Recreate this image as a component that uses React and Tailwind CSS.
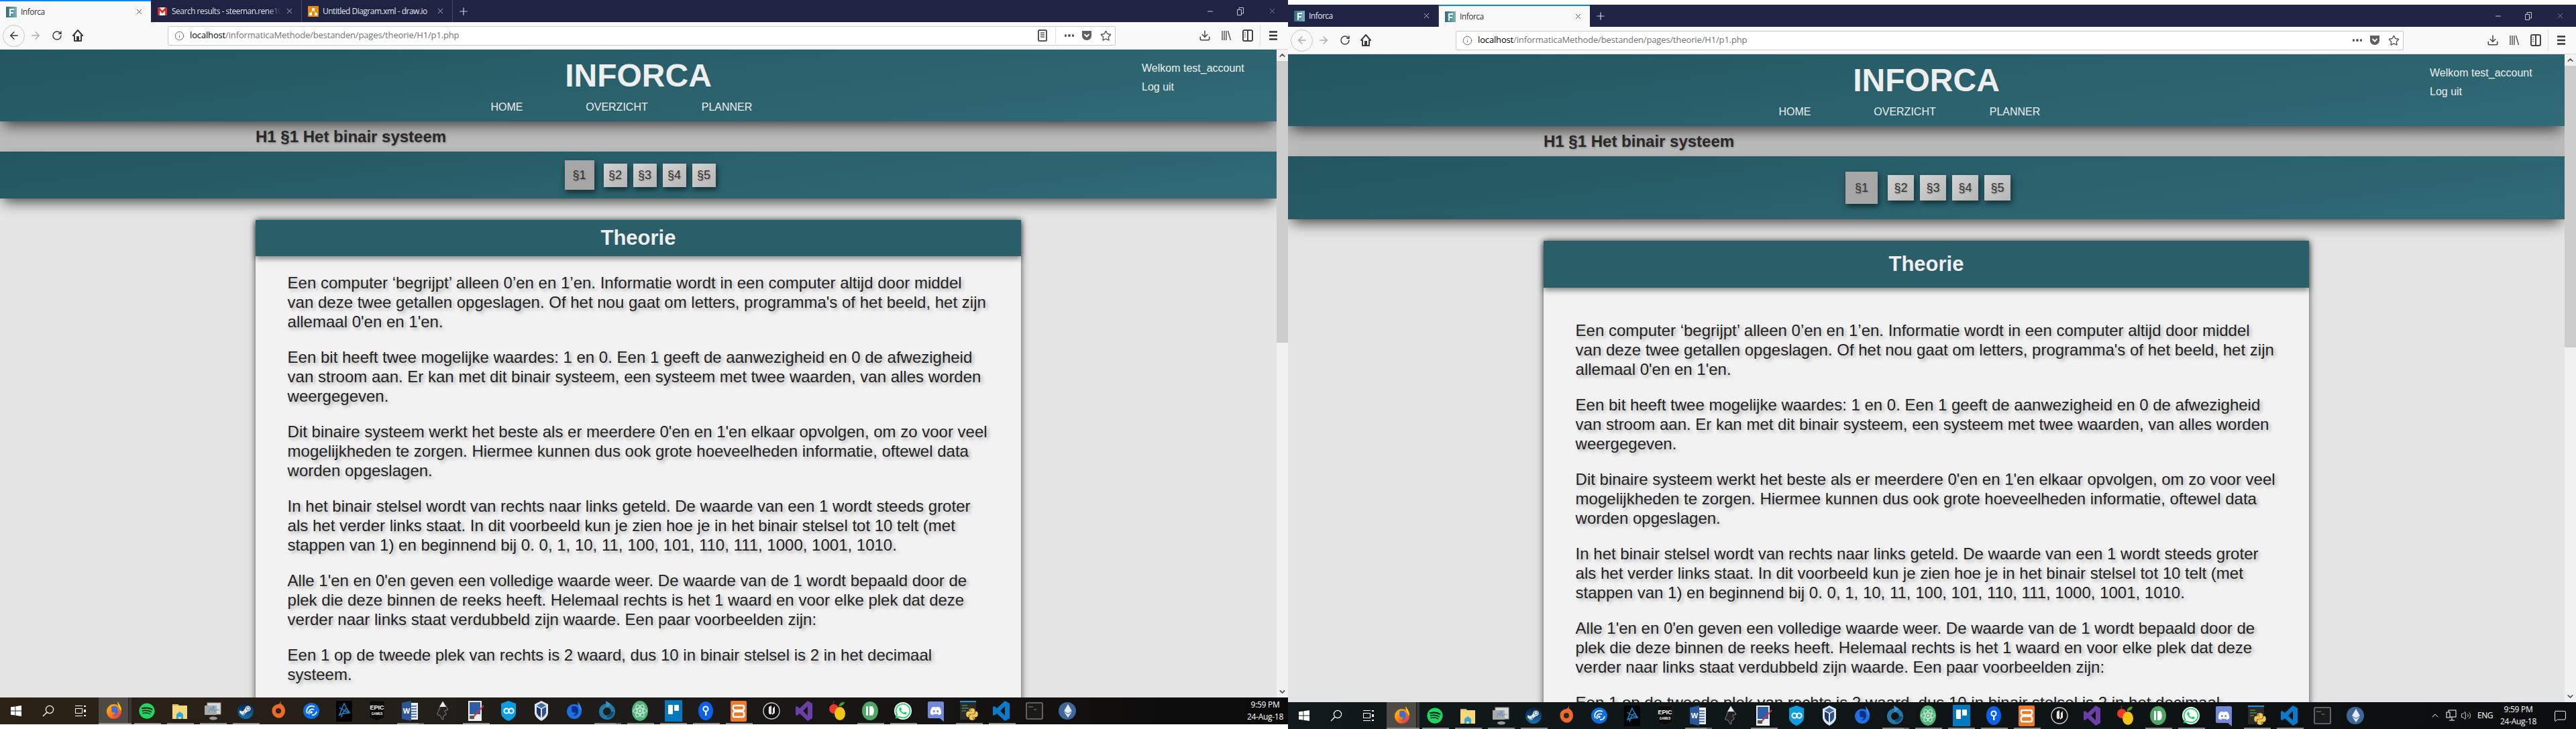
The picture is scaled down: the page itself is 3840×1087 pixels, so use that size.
import React from "react";
import { ArrowLeft, ArrowRight, RotateCw, Info, X, Plus, Minus, Star, Download, ChevronUp, ChevronDown, Volume2, MessageSquare } from "lucide-react";
import { FaSpotify, FaSteamSymbol, FaWhatsapp, FaDiscord, FaEthereum, FaPython } from "react-icons/fa";

const Svg = ({ children, w = 28, h = 32, vb = "0 0 28 32" }) => (
  <svg width={w} height={h} viewBox={vb}>{children}</svg>
);

const Firefox = ({ blue }) => (
  <Svg>
    <defs>
      <linearGradient id="ffg" x1="0" y1="0" x2="1" y2="1">
        <stop offset="0" stopColor="#ffcb00" /><stop offset="0.5" stopColor="#ff7a1a" /><stop offset="1" stopColor="#e6204f" />
      </linearGradient>
    </defs>
    <circle cx="14" cy="17" r="11" fill={blue ? "#1e6fe0" : "url(#ffg)"} />
    <path d="M19 2c3 4 6 8 6 14-3-2-5-6-6-14z" fill={blue ? "#3b8cf0" : "#ffd000"} />
    <path d="M10 10c6-3 10 0 10 6s-4 8-8 7c3-1 5-3 3-5-2 1-5 0-5-3 1-1 0-3 0-5z" fill={blue ? "#0f2f8f" : "#3a6fd8"} />
  </Svg>
);
const Folder = () => (
  <Svg>
    <path d="M3 6h8l2 2h12v20H3z" fill="#f5d97a" />
    <path d="M3 6h8l2 2H3z" fill="#e0b73f" />
    <path d="M9 28v-7l5-4 5 4v7h-3v-3h-4v3z" fill="#2ea7e0" />
  </Svg>
);
const Monitor = () => (
  <Svg>
    <rect x="6" y="4" width="20" height="17" fill="#d8d8d8" stroke="#9a9a9a" />
    <rect x="2" y="8" width="18" height="14" fill="#a9a9a9" />
    <path d="M8 18l3-6 2 4 2-7 2 8 3-3 4 1" stroke="#4d8fd0" fill="none" />
    <ellipse cx="15" cy="27" rx="6" ry="2.5" fill="#999" />
  </Svg>
);
const Steam = () => (
  <Svg>
    <defs>
      <linearGradient id="stg" x1="0" y1="0" x2="0" y2="1"><stop offset="0" stopColor="#0c1d3e" /><stop offset="1" stopColor="#1574b0" /></linearGradient>
    </defs>
    <circle cx="14" cy="16" r="12" fill="url(#stg)" />
    <foreignObject x="4" y="6" width="20" height="20"><FaSteamSymbol className="text-[#e5e5e5] text-[19px]" /></foreignObject>
  </Svg>
);
const Origin = () => (
  <Svg>
    <path d="M18 1c-1 3-2 4-4 5C7 7 3 12 5 19c2 6 8 9 13 7 6-3 7-10 5-15-1-3-4-5-6-6 1-1 1-2 1-4z" fill="#ee6a2b" />
    <circle cx="14" cy="16" r="4" fill="#2a2422" />
  </Svg>
);
const Uplay = () => (
  <Svg>
    <circle cx="14" cy="16" r="12" fill="#0a6de0" />
    <path d="M8 20c-3-8 4-14 11-10M11 21c-2-5 2-9 7-7M15 22c3 1 6-1 7-5" stroke="#fff" strokeWidth="1.8" fill="none" />
    <circle cx="14" cy="18" r="1.8" fill="#fff" />
  </Svg>
);
const Bnet = () => (
  <Svg>
    <rect x="2" y="1" width="24" height="31" rx="1" fill="#020406" />
    <path d="M14 5c2 5 5 9 8 14-6 0-11 1-15 3 2-5 4-11 7-17zM7 11c4 3 9 6 14 7M10 25c1-5 4-10 8-13" stroke="#1b88d0" strokeWidth="1.5" fill="none" />
  </Svg>
);
const Epic = () => (
  <Svg>
    <path d="M3 1h22v25l-11 5-11-5z" fill="#0c0c0c" stroke="#333" strokeWidth="0.5" />
    <text x="14" y="14" textAnchor="middle" fontSize="9" fontWeight="700" fill="#fff" fontFamily="Liberation Sans">EPIC</text>
    <text x="14" y="22" textAnchor="middle" fontSize="4.5" fontWeight="700" fill="#fff" fontFamily="Liberation Sans">GAMES</text>
  </Svg>
);
const Word = () => (
  <Svg>
    <rect x="10" y="4" width="16" height="25" fill="#e8eef8" />
    <path d="M15 9h9M15 13h9M15 17h9M15 21h9M15 25h9" stroke="#2b579a" strokeWidth="1.5" />
    <path d="M2 4l14-3v30L2 28z" fill="#2b579a" />
    <text x="9" y="20" textAnchor="middle" fontSize="11" fontWeight="700" fill="#fff" fontFamily="Liberation Sans">W</text>
  </Svg>
);
const Inkscape = () => (
  <Svg>
    <path d="M14 2l8 12c-2 2-4 0-5 2s3 2 2 5c-1 2-3 1-4 3s1 4-1 5c-2 0-2-4-4-6-2-1-5 0-4-3 0-2 2-3 2-5z" fill="#222" stroke="#bbb" strokeWidth="0.7" />
    <path d="M14 2l5 8h-10z" fill="#eaeaea" />
  </Svg>
);
const Paint = () => (
  <Svg>
    <rect x="3" y="1" width="20" height="30" fill="#f0f0f0" />
    <rect x="5" y="3" width="16" height="18" fill="#2f5ea8" />
    <path d="M8 28L26 8" stroke="#d0343f" strokeWidth="2" />
    <rect x="5" y="23" width="7" height="5" fill="#555" />
  </Svg>
);
const Vpn = () => (
  <Svg>
    <path d="M14 1l11 4v14c0 6-6 10-11 12-5-2-11-6-11-12V5z" fill="#0a9de0" />
    <circle cx="11" cy="16" r="3.6" stroke="#fff" strokeWidth="2" fill="none" />
    <circle cx="18" cy="16" r="3.6" stroke="#fff" strokeWidth="2" fill="none" />
  </Svg>
);
const VBox = () => (
  <Svg>
    <path d="M14 1l10 5v13c0 5-6 10-10 12-4-2-10-7-10-12V6z" fill="#dfe5ee" />
    <path d="M14 4l7 4-7 4-7-4z" fill="#3a6ea8" />
    <path d="M7 10l6 3v13c-3-2-6-5-6-8z" fill="#1f3a66" />
    <path d="M21 10l-6 3v13c3-2 6-5 6-8z" fill="#2c5488" />
  </Svg>
);
const Ring = () => (
  <Svg>
    <circle cx="14" cy="17" r="9" stroke="#2379a8" strokeWidth="6" fill="none" />
    <path d="M12 1l8 5-7 5z" fill="#3a95c8" />
    <path d="M14 24c6 0 8-4 8-7" stroke="#124c70" strokeWidth="5" fill="none" />
  </Svg>
);
const Atom = () => (
  <Svg>
    <ellipse cx="14" cy="16" rx="12" ry="15" fill="#4fb67a" />
    <ellipse cx="14" cy="16" rx="10" ry="4" stroke="#eaf7ee" fill="none" />
    <ellipse cx="14" cy="16" rx="10" ry="4" stroke="#eaf7ee" fill="none" transform="rotate(60 14 16)" />
    <ellipse cx="14" cy="16" rx="10" ry="4" stroke="#eaf7ee" fill="none" transform="rotate(120 14 16)" />
    <circle cx="14" cy="16" r="1.8" fill="#eaf7ee" />
  </Svg>
);
const Trello = () => (
  <Svg>
    <rect x="2" y="0" width="26" height="32" fill="#0079bf" />
    <rect x="7" y="7" width="7" height="14" rx="1" fill="#fff" />
    <rect x="16" y="7" width="7" height="9" rx="1" fill="#fff" />
  </Svg>
);
const Keeper = () => (
  <Svg>
    <ellipse cx="14" cy="16" rx="11" ry="14" fill="#0b5fe8" />
    <circle cx="14" cy="13" r="3.6" stroke="#fff" strokeWidth="2" fill="none" />
    <rect x="13" y="16" width="2.4" height="7" fill="#fff" />
  </Svg>
);
const Xampp = () => (
  <Svg>
    <rect x="2" y="1" width="24" height="31" rx="2" fill="#ec7a2b" />
    <path d="M8 8h12c3 0 3 6 0 7h-12c-3-1-3-7 0-7zM8 17h12c3 1 3 8 0 8h-12c-3 0-3-7 0-8z" stroke="#fff" strokeWidth="2.4" fill="none" />
  </Svg>
);
const Unreal = () => (
  <Svg>
    <circle cx="14" cy="16" r="12" fill="#111" stroke="#cfcfcf" strokeWidth="1.4" />
    <path d="M10 10c0 5-1 9 1 11 2 1 3-1 4-2v3l4-3V9l-3 3v7c-2 1-2-1-2-2v-9z" fill="#e5e5e5" />
  </Svg>
);
const VS = () => (
  <Svg>
    <path d="M19 1l7 4v22l-7 4-12-11-4 3-2-1V10l2-1 4 3zM19 9l-7 7 7 7z" fill="#6b3fa8" />
  </Svg>
);
const Fruit = () => (
  <Svg>
    <circle cx="9" cy="13" r="7" fill="#e8392b" />
    <ellipse cx="18" cy="20" rx="8" ry="10" fill="#f0c419" />
    <path d="M16 9c2-5 5-7 9-6-1 4-4 6-9 6z" fill="#4f9a2e" />
    <path d="M8 6l1-5" stroke="#5a3a1a" strokeWidth="1.5" />
  </Svg>
);
const Pushbullet = () => (
  <Svg>
    <ellipse cx="14" cy="16" rx="12" ry="14" fill="#4ea865" />
    <rect x="8" y="9" width="3" height="14" fill="#fff" />
    <path d="M13 9h3c5 0 5 14 0 14h-3z" fill="#fff" />
  </Svg>
);
const Whats = () => (
  <Svg>
    <circle cx="14" cy="16" r="13" fill="#fff" />
    <foreignObject x="1" y="3" width="26" height="26"><FaWhatsapp className="text-[#25d366] text-[26px]" /></foreignObject>
  </Svg>
);
const Discord = () => (
  <Svg>
    <path d="M4 2h20c1 0 2 1 2 2v28l-6-5H4c-1 0-2-1-2-2V4c0-1 1-2 2-2z" fill="#7289da" />
    <foreignObject x="5" y="7" width="18" height="18"><FaDiscord className="text-white text-[18px]" /></foreignObject>
  </Svg>
);
const Pycharm = () => (
  <Svg>
    <rect x="1" y="1" width="24" height="28" fill="#2b2b2b" />
    <rect x="1" y="1" width="24" height="2" fill="#2b8fd8" />
    <path d="M4 8h8M4 12h10M4 16h6" stroke="#4e8a4e" strokeWidth="1.5" />
    <foreignObject x="9" y="11" width="20" height="20"><FaPython className="text-[#f2c94c] text-[20px]" /></foreignObject>
  </Svg>
);
const VSCode = () => (
  <Svg>
    <path d="M19 1l7 4v22l-7 4-12-11-4 3-2-1V10l2-1 4 3zM19 9l-7 7 7 7z" fill="#0a7acc" />
  </Svg>
);
const Terminal = () => (
  <Svg>
    <rect x="2" y="4" width="24" height="24" rx="1" fill="#1a1a1a" stroke="#777" strokeWidth="1.6" />
    <path d="M5 10h7M13 14h4" stroke="#666" strokeWidth="1.4" />
  </Svg>
);
const Eth = () => (
  <Svg>
    <circle cx="14" cy="16" r="13" fill="#3f6699" />
    <foreignObject x="5" y="6" width="18" height="20"><FaEthereum className="text-[#e6ecf4] text-[20px]" /></foreignObject>
  </Svg>
);
const Spotify = () => <FaSpotify className="text-[#1ed760] text-[24px]" />;

const APPS = [
  [<Firefox />, 1, "a"], [<Spotify />, 1], [<Folder />, 1], [<Monitor />, 1], [<Steam />, 1],
  [<Origin />], [<Uplay />], [<Bnet />], [<Epic />], [<Word />, 2], [<Inkscape />], [<Paint />, 1],
  [<Vpn />], [<VBox />], [<Firefox blue />], [<Ring />, 2], [<Atom />, 1], [<Trello />, 1],
  [<Keeper />, 1], [<Xampp />, 1], [<Unreal />], [<VS />], [<Fruit />], [<Pushbullet />, 1],
  [<Whats />, 1], [<Discord />], [<Pycharm />, 1], [<VSCode />, 1], [<Terminal />], [<Eth />],
];

const Favicon = () => (
  <svg width="16" height="16" viewBox="0 0 16 16" className="shrink-0">
    <defs><linearGradient id="fav" x1="0" y1="0" x2="1" y2="0"><stop offset="0" stopColor="#2d6d7b" /><stop offset="1" stopColor="#7fb4bf" /></linearGradient></defs>
    <rect width="16" height="16" fill="url(#fav)" />
    <path d="M5 3h7v2H7v3h4v2H7v4H5z" fill="#fff" />
  </svg>
);
const Gmail = () => (
  <svg width="16" height="16" viewBox="0 0 16 16" className="shrink-0">
    <rect x="1" y="2" width="14" height="12" fill="#f2f2f2" />
    <path d="M1 2h2.5L8 7l4.5-5H15v12h-3V7L8 11 4 7v7H1z" fill="#d93025" />
  </svg>
);
const Drawio = () => (
  <svg width="16" height="16" viewBox="0 0 16 16" className="shrink-0">
    <rect width="16" height="16" fill="#f08705" />
    <rect x="6" y="3" width="4" height="4" fill="#fff" />
    <rect x="2" y="10" width="4" height="4" fill="#fff" />
    <rect x="10" y="10" width="4" height="4" fill="#fff" />
    <path d="M8 6l-4 5M8 6l4 5" stroke="#fff" />
  </svg>
);

const Tab = ({ active, icon, title, fade }) => (
  <div
    className={
      active
        ? "w-[225px] h-[33px] bg-[#f9f9f9] border-t-2 border-[#0a84ff] flex items-center pl-[9px] pr-[11px] text-[#333]"
        : "w-[225px] h-[33px] border-r border-[#4a4d68] flex items-center pl-[9px] pr-[11px] text-[#e4e4ea]"
    }
  >
    {icon}
    <span className={(fade ? "[mask-image:linear-gradient(90deg,#000_88%,transparent)] " : "") + "ml-[6px] flex-1 overflow-hidden whitespace-nowrap text-[12px] font-['Open_Sans',sans-serif] tracking-[-0.5px]"}>{title}</span>
    <X size={13} strokeWidth={1.4} className="ml-[6px] shrink-0" />
  </div>
);

const Reader = () => (
  <svg width="14" height="18" viewBox="0 0 14 18" className="text-[#555]">
    <rect x="1" y="1" width="12" height="16" rx="1.5" fill="none" stroke="currentColor" strokeWidth="2" />
    <path d="M4 5h6M4 8h6M4 11h6" stroke="currentColor" strokeWidth="1.4" />
  </svg>
);
const Pocket = () => (
  <svg width="16" height="16" viewBox="0 0 16 16">
    <path d="M1 1h14v7c0 4-3 7-7 7s-7-3-7-7z" fill="#5f5f5f" />
    <path d="M4.5 6L8 9.5 11.5 6" stroke="#fff" strokeWidth="2" fill="none" />
  </svg>
);
const Library = () => (
  <svg width="16" height="18" viewBox="0 0 16 18">
    <path d="M2 2v14M5 2v14M8 2v14M10.5 2l4 14" stroke="#555" strokeWidth="1.5" fill="none" />
  </svg>
);
const Sidebar = () => (
  <svg width="16" height="18" viewBox="0 0 16 18">
    <rect x="1" y="1" width="14" height="16" rx="2" fill="none" stroke="#444" strokeWidth="2" />
    <rect x="7" y="1" width="2" height="16" fill="#444" />
    <path d="M3 5h2M3 8h2M3 11h2" stroke="#444" />
  </svg>
);
const Home = () => (
  <svg width="16" height="20" viewBox="0 0 16 20">
    <path d="M8 2L1 10h2v8h10v-8h2z" fill="none" stroke="#3a3a3a" strokeWidth="2" strokeLinejoin="round" />
    <rect x="6" y="11" width="4" height="7" fill="#3a3a3a" />
  </svg>
);
const Burger = () => (
  <svg width="12" height="14" viewBox="0 0 12 14">
    <path d="M0 1.5h12M0 7h12M0 12.5h12" stroke="#333" strokeWidth="2.4" />
  </svg>
);
const WinLogo = () => (
  <svg width="16" height="16" viewBox="0 0 16 16">
    <path d="M0 2.3L6.5 1.4v6.2H0zM7.4 1.3L16 0v7.6H7.4zM0 8.4h6.5v6.2L0 13.7zM7.4 8.4H16V16l-8.6-1.3z" fill="#fff" />
  </svg>
);
const SearchI = () => (
  <svg width="18" height="18" viewBox="0 0 18 18">
    <circle cx="11" cy="7" r="5.6" fill="none" stroke="#fff" strokeWidth="1.2" />
    <path d="M7 11L1 17" stroke="#fff" strokeWidth="1.4" />
  </svg>
);
const TaskView = () => (
  <svg width="18" height="16" viewBox="0 0 18 16">
    <path d="M1 .5h11M1 15.5h11" stroke="#fff" />
    <rect x="1.5" y="4.5" width="10" height="7" fill="none" stroke="#fff" />
    <rect x="14" y="0" width="3" height="2" fill="#fff" />
    <rect x="14" y="6" width="3" height="4" fill="#fff" />
    <rect x="14" y="14" width="3" height="2" fill="#fff" />
  </svg>
);
const Network = () => (
  <svg width="16" height="18" viewBox="0 0 16 18">
    <rect x="4" y="1" width="11" height="10" fill="none" stroke="#fff" />
    <rect x="1" y="4" width="5" height="8" fill="#111" stroke="#fff" />
    <path d="M9 11v5M5 16h8" stroke="#fff" />
  </svg>
);

function Taskbar({ tint, tray }) {
  return (
    <div className={"h-[40px] shrink-0 flex items-center text-white font-['Open_Sans',sans-serif] " + tint}>
      <div className="w-[48px] flex justify-center"><WinLogo /></div>
      <div className="w-[48px] flex justify-center"><SearchI /></div>
      <div className="w-[48px] flex justify-center"><TaskView /></div>
      <div className="w-[3px]" />
      {APPS.map(([icon, mark, active], i) => (
        <div key={i} className="w-[49px] h-[40px] relative flex items-center justify-center">
          {active && <div className="absolute inset-y-0 left-0 w-[44px] bg-[#4e4b46]" />}
          {active && <div className="absolute inset-y-0 left-[45px] w-[4px] bg-[#3a3835]" />}
          <div className="relative z-10 flex items-center justify-center w-[28px] h-[32px] ml-[-4px]">{icon}</div>
          {mark && <div className={active ? "absolute bottom-0 left-0 w-[49px] h-[2px] bg-[#8c8c88]" : "absolute bottom-0 left-[4px] w-[40px] h-[2px] bg-[#8c8c88]"} />}
          {mark === 2 && <div className="absolute bottom-0 left-[36px] w-[8px] h-[2px] bg-[#666]" />}
        </div>
      ))}
      <div className="flex-1" />
      {tray && (
        <div className="flex items-center">
          <ChevronUp size={16} strokeWidth={1.4} />
          <div className="ml-[8px] flex"><Network /></div>
          <Volume2 size={16} strokeWidth={1.2} className="ml-[6px]" />
          <span className="ml-[9px] text-[12px] tracking-[-0.5px]">ENG</span>
        </div>
      )}
      <div className={tray ? "w-[76px] text-center text-[12px] leading-[18px] tracking-[-0.3px]" : "w-[68px] text-center text-[12px] leading-[18px] tracking-[-0.3px]"}>
        <div>9:59 PM</div>
        <div>24-Aug-18</div>
      </div>
      {tray && (
        <div className="w-[48px] flex justify-center"><MessageSquare size={19} strokeWidth={1.2} /></div>
      )}
    </div>
  );
}

const PARAS = [
  "Een computer ‘begrijpt’ alleen 0’en en 1’en. Informatie wordt in een computer altijd door middel van deze twee getallen opgeslagen. Of het nou gaat om letters, programma's of het beeld, het zijn allemaal 0'en en 1'en.",
  "Een bit heeft twee mogelijke waardes: 1 en 0. Een 1 geeft de aanwezigheid en 0 de afwezigheid van stroom aan. Er kan met dit binair systeem, een systeem met twee waarden, van alles worden weergegeven.",
  "Dit binaire systeem werkt het beste als er meerdere 0'en en 1'en elkaar opvolgen, om zo voor veel mogelijkheden te zorgen. Hiermee kunnen dus ook grote hoeveelheden informatie, oftewel data worden opgeslagen.",
  "In het binair stelsel wordt van rechts naar links geteld. De waarde van een 1 wordt steeds groter als het verder links staat. In dit voorbeeld kun je zien hoe je in het binair stelsel tot 10 telt (met stappen van 1) en beginnend bij 0. 0, 1, 10, 11, 100, 101, 110, 111, 1000, 1001, 1010.",
  "Alle 1'en en 0'en geven een volledige waarde weer. De waarde van de 1 wordt bepaald door de plek die deze binnen de reeks heeft. Helemaal rechts is het 1 waard en voor elke plek dat deze verder naar links staat verdubbeld zijn waarde. Een paar voorbeelden zijn:",
  "Een 1 op de tweede plek van rechts is 2 waard, dus 10 in binair stelsel is 2 in het decimaal systeem.",
];

function SectionBar({ big }) {
  const small = big
    ? "w-[39px] h-[38px] flex items-center justify-center bg-[linear-gradient(135deg,#d4d4d4,#b4b4b4)] shadow-[2px_4px_8px_rgba(0,0,0,0.55)] text-[#333] [text-shadow:1px_1px_2px_rgba(0,0,0,0.25)]"
    : "w-[35px] h-[35px] flex items-center justify-center bg-[linear-gradient(135deg,#d4d4d4,#b4b4b4)] shadow-[2px_4px_8px_rgba(0,0,0,0.55)] text-[#333] [text-shadow:1px_1px_2px_rgba(0,0,0,0.25)]";
  return (
    <nav className={(big ? "h-[94px] " : "h-[70px] ") + "relative z-10 flex items-center justify-center pl-[5px] text-[18px] bg-[linear-gradient(172deg,#235660,#306b77)] shadow-[0_10px_20px_-5px_rgba(0,0,0,0.7)]"}>
      <div className={(big ? "w-[48px] h-[48px] mr-[15px]" : "w-[44px] h-[44px] mr-[14px]") + " flex items-center justify-center bg-[#a6a6a6] shadow-[2px_4px_8px_rgba(0,0,0,0.55)] text-[#333] [text-shadow:1px_1px_2px_rgba(0,0,0,0.25)]"}>§1</div>
      <div className="flex gap-[9px]">
        <div className={small}>§2</div>
        <div className={small}>§3</div>
        <div className={small}>§4</div>
        <div className={small}>§5</div>
      </div>
    </nav>
  );
}

function Page({ big }) {
  return (
    <div className="flex-1 min-h-0 flex overflow-hidden">
      <main className="flex-1 min-w-0 bg-[#e4e4e4] font-['Liberation_Sans',Arial,sans-serif] overflow-hidden">
        <header className="relative z-10 h-[107px] grid grid-cols-[1fr_auto_1fr] bg-[linear-gradient(172deg,#235660,#306b77)] shadow-[0_10px_20px_-5px_rgba(0,0,0,0.7)] text-[#eeeeee]">
          <div />
          <div className="flex flex-col items-center pt-[11px]">
            <h1 className="text-[48px] leading-[55px] font-bold">INFORCA</h1>
            <ul className="flex mt-[8px] pr-[64px] text-[16px] leading-[24px]">
              <li className="w-[164px] text-center">HOME</li>
              <li className="w-[164px] text-center">OVERZICHT</li>
              <li className="w-[164px] text-center">PLANNER</li>
            </ul>
          </div>
          <div className="flex justify-end pt-[14px] pr-[47px] text-[16px] leading-[28px]">
            <div className="w-[154px]">
              <div>Welkom test_account</div>
              <div>Log uit</div>
            </div>
          </div>
        </header>
        <div className="h-[45px] bg-[#bbbbbb] pl-[381px] flex items-center text-[24px] font-bold text-[#2a2a2a] [text-shadow:1px_1px_3px_rgba(0,0,0,0.3)]">
          H1 §1 Het binair systeem
        </div>
        <SectionBar big={big} />
        <section className="ml-[20%] w-[60%] mt-[32px] bg-[#f2f2f2] shadow-[0_0_10px_rgba(0,0,0,0.7)]">
          <h2 className={(big ? "h-[70px] " : "h-[54px] ") + "flex items-center justify-center bg-[#2a5f69] text-[#eeeeee] text-[31px] font-bold shadow-[0_4px_8px_rgba(0,0,0,0.45)]"}>
            Theorie
          </h2>
          <div className={(big ? "pt-[49px] " : "pt-[25px] ") + "px-[48px] pb-[48px] flex flex-col gap-[24px] text-[24px] leading-[29px] text-[#222222] [text-shadow:3px_3px_5px_rgba(0,0,0,0.3)]"}>
            {PARAS.map((p, i) => <p key={i}>{p}</p>)}
          </div>
        </section>
      </main>
      <aside className="w-[17px] shrink-0 bg-[#f1f1f1] flex flex-col items-center justify-between relative">
        <ChevronUp size={13} strokeWidth={3} className="text-[#505050] mt-[2px]" />
        <div className="h-[420px] absolute top-[17px] inset-x-0 bg-[#cdcdcd]" />
        <ChevronDown size={13} strokeWidth={3} className="text-[#505050] mb-[2px]" />
      </aside>
    </div>
  );
}

function Browser({ tabs, reader, dim, tint, tray, big, offset }) {
  return (
    <div className={(offset ? "pt-[7px] " : "pb-[7px] ") + "w-[1920px] h-[1087px] shrink-0 flex flex-col overflow-hidden bg-white"}>
      <div className="h-[33px] shrink-0 bg-[#1f2344] flex items-center">
        {tabs}
        <Plus size={18} strokeWidth={1.6} className="text-[#d0d0dc] ml-[7px]" />
        <div className="flex-1" />
        <Minus size={12} className="text-[#c8c8d4] mr-[34px]" />
        <svg width="10" height="12" viewBox="0 0 10 12" className="mr-[36px]"><path d="M.5 3.5h6v8h-6zM3 3V.5h6.5V9H7" fill="none" stroke="#c8c8d4" /></svg>
        <X size={13} strokeWidth={1} className="text-[#c8c8d4] mr-[17px]" />
      </div>
      <div className="h-[41px] shrink-0 bg-[#f9f9f9] border-b border-[#d8d8d8] flex items-center font-['Open_Sans',sans-serif]">
        <div className="ml-[4px] w-[33px] h-[33px] rounded-full border border-[#c8c8c8] flex items-center justify-center">
          <ArrowLeft size={18} strokeWidth={1.8} className={dim ? "text-[#aaa]" : "text-[#333]"} />
        </div>
        <ArrowRight size={18} strokeWidth={1.8} className="ml-[7px] text-[#aaa]" />
        <RotateCw size={16} strokeWidth={2.2} className="ml-[15px] text-[#3a3a3a]" />
        <div className="ml-[15px] flex"><Home /></div>
        <div className="ml-[126px] w-[1413px] h-[29px] bg-white border border-[#ccc] rounded-[2px] flex items-center">
          <Info size={15} strokeWidth={1.2} className="ml-[9px] text-[#444]" />
          <div className="ml-[8px] text-[13px] whitespace-nowrap tracking-[-0.15px] text-[#737373]"><span className="text-black">localhost</span>/informaticaMethode/bestanden/pages/theorie/H1/p1.php</div>
          <div className="flex-1" />
          {reader ? <Reader /> : <div className="w-[14px]" />}
          <div className={(reader ? "bg-[#ddd] " : "bg-white ") + "w-px h-[24px] ml-[12px] mr-[13px]"} />
          <div className="flex gap-[2px] mr-[11px]">
            <div className="w-[3.5px] h-[3.5px] rounded-full bg-[#555]" />
            <div className="w-[3.5px] h-[3.5px] rounded-full bg-[#555]" />
            <div className="w-[3.5px] h-[3.5px] rounded-full bg-[#555]" />
          </div>
          <Pocket />
          <Star size={17} strokeWidth={2} className="text-[#555] ml-[12px] mr-[5px]" />
        </div>
        <Download size={18} strokeWidth={2} className="ml-[124px] text-[#444]" />
        <div className="ml-[15px] flex"><Library /></div>
        <div className="ml-[16px] flex"><Sidebar /></div>
        <div className="w-px h-[32px] bg-[#ddd] ml-[10px]" />
        <div className="ml-[13px] flex"><Burger /></div>
      </div>
      <Page big={big} />
      <Taskbar tint={tint} tray={tray} />
    </div>
  );
}

export default function App() {
  return (
    <div className="flex w-[3840px] h-[1087px] overflow-hidden bg-white">
      <Browser
        reader
        tint="bg-[linear-gradient(90deg,#2c2216,#1d1c1a_50%,#0b0a0a)]"
        tabs={
          <>
            <Tab active icon={<Favicon />} title="Inforca" />
            <Tab fade icon={<Gmail />} title="Search results - steeman.rene10" />
            <Tab icon={<Drawio />} title="Untitled Diagram.xml - draw.io" />
          </>
        }
      />
      <Browser
        dim
        tray
        big
        offset
        tint="bg-[linear-gradient(90deg,#10191b,#0f1516_50%,#0c0e0f)]"
        tabs={
          <>
            <Tab icon={<Favicon />} title="Inforca" />
            <Tab active icon={<Favicon />} title="Inforca" />
          </>
        }
      />
    </div>
  );
}
